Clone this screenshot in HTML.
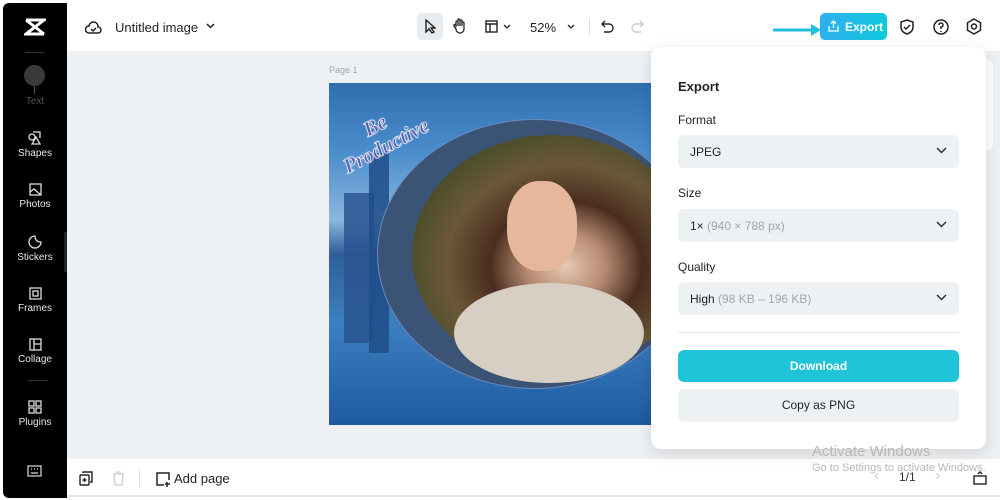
<!DOCTYPE html>
<html><head><meta charset="utf-8"><style>
*{box-sizing:border-box;margin:0;padding:0}
body{width:1000px;height:500px;overflow:hidden;background:#fff;font-family:"Liberation Sans",sans-serif;position:relative;color:#1f2329}
.side{position:absolute;left:3px;top:3px;width:64px;height:495px;background:#000;border-radius:6px 0 0 6px}
.it{position:absolute;left:0;width:64px;text-align:center;color:#e8e8e8;font-size:10px}
.it svg{display:block;margin:0 auto 3px}
.top{position:absolute;left:67px;top:3px;right:0;height:48px;background:#fff}
.canvas{position:absolute;left:67px;top:51px;right:0;height:408px;background:#eef1f4}
.bot{position:absolute;left:67px;top:459px;right:0;height:38px;background:#fff;border-bottom:2px solid #e5e5e5}
.panel{position:absolute;left:651px;top:47px;width:335px;height:402px;background:#fff;border-radius:10px;box-shadow:0 4px 16px rgba(0,0,0,.12)}
.lbl{position:absolute;left:27px;font-size:12px;color:#222}
.fld{position:absolute;left:27px;width:281px;height:33px;background:#eef1f4;border-radius:6px;font-size:12px;padding:10px 12px;color:#222}
.fld .g{color:#a0a6ae}
.fld svg{position:absolute;right:12px;top:12px}
</style></head><body>
<div class="side">
 <svg style="position:absolute;left:21px;top:15px" width="22" height="18" viewBox="0 0 22 18"><path d="M2 2h18L2 16h18M2 2l18 14" stroke="#fff" stroke-width="3" fill="none"/></svg>
 <div style="position:absolute;left:22px;top:49px;width:20px;height:1px;background:#333"></div>
 <div style="position:absolute;left:21px;top:62px;width:21px;height:21px;border-radius:50%;background:#3a3a3a"></div>
 <div style="position:absolute;left:31px;top:83px;width:1px;height:8px;background:#555"></div>
 <div class="it" style="top:93px;color:#555">Text</div>
 <div class="it" style="top:128px"><svg width="14" height="14" viewBox="0 0 14 14" fill="none" stroke="#ddd" stroke-width="1.3"><circle cx="4" cy="6" r="3"/><path d="M5 1h7v6M8 6l4 7H4z"/></svg>Shapes</div>
 <div class="it" style="top:180px"><svg width="13" height="13" viewBox="0 0 13 13" fill="none" stroke="#ddd" stroke-width="1.3"><rect x="1" y="1" width="11" height="11"/><path d="M1 9l4-3 7 6"/></svg>Photos</div>
 <div class="it" style="top:232px"><svg width="14" height="14" viewBox="0 0 14 14" fill="none" stroke="#ddd" stroke-width="1.3"><path d="M13 7A6 6 0 1 1 7 1c0 4 2 6 6 6z"/></svg>Stickers</div>
 <div class="it" style="top:284px"><svg width="13" height="13" viewBox="0 0 13 13" fill="none" stroke="#ddd" stroke-width="1.3"><rect x="1" y="1" width="11" height="11"/><rect x="4" y="4" width="5" height="5"/></svg>Frames</div>
 <div class="it" style="top:335px"><svg width="13" height="13" viewBox="0 0 13 13" fill="none" stroke="#ddd" stroke-width="1.3"><rect x="1" y="1" width="11" height="11"/><path d="M5 1v11M5 6h7"/></svg>Collage</div>
 <div style="position:absolute;left:25px;top:377px;width:20px;height:1px;background:#333"></div>
 <div class="it" style="top:397px"><svg width="14" height="14" viewBox="0 0 14 14" fill="none" stroke="#ddd" stroke-width="1.3"><rect x="1" y="1" width="5" height="5"/><rect x="8" y="1" width="5" height="5"/><rect x="1" y="8" width="5" height="5"/><rect x="8" y="8" width="5" height="5"/></svg>Plugins</div>
 <svg style="position:absolute;left:24px;top:462px" width="15" height="12" viewBox="0 0 15 12" fill="none" stroke="#ddd" stroke-width="1.2"><rect x="1" y="1" width="13" height="10"/><path d="M4 4h1M7 4h1M10 4h1M4 8h7"/></svg>
</div>
<div style="position:absolute;left:64px;top:232px;width:7px;height:40px;background:#222;border-radius:0 4px 4px 0"></div>
<div class="top">
 <svg style="position:absolute;left:18px;top:17px" width="17" height="14" viewBox="0 0 17 14" fill="none" stroke="#222" stroke-width="1.5"><path d="M4 13a3.5 3.5 0 0 1 0-7 4.5 4.5 0 0 1 9 1 3 3 0 0 1 0 6z"/><path d="M6 9l2 2 3-3"/></svg>
 <div style="position:absolute;left:48px;top:17px;font-size:13px;color:#222">Untitled image</div>
 <svg style="position:absolute;left:139px;top:20px" width="9" height="6" viewBox="0 0 9 6"><path d="M1 1l3.5 3.5L8 1" stroke="#222" stroke-width="1.5" fill="none"/></svg>
 <div style="position:absolute;left:350px;top:10px;width:26px;height:27px;background:#e9ecef;border-radius:5px"></div>
 <svg style="position:absolute;left:357px;top:16px" width="12" height="15" viewBox="0 0 12 15"><path d="M2 1v12l3-3 3 4 2-1-3-4h4z" stroke="#222" stroke-width="1.4" fill="none"/></svg>
 <svg style="position:absolute;left:386px;top:15px" width="14" height="16" viewBox="0 0 14 16" fill="none" stroke="#222" stroke-width="1.3"><path d="M3 9V4a1 1 0 0 1 2 0v4V2a1 1 0 0 1 2 0v6V3a1 1 0 0 1 2 0v5V5a1 1 0 0 1 2 0v6a4 4 0 0 1-4 4H7a4 4 0 0 1-4-4L1 8a1 1 0 0 1 2-1z"/></svg>
 <svg style="position:absolute;left:418px;top:17px" width="13" height="13" viewBox="0 0 13 13" fill="none" stroke="#222" stroke-width="1.4"><rect x="1" y="1" width="11" height="11"/><path d="M1 4h11M5 4v8"/></svg>
 <svg style="position:absolute;left:436px;top:21px" width="8" height="5" viewBox="0 0 8 5"><path d="M1 1l3 3 3-3" stroke="#222" stroke-width="1.3" fill="none"/></svg>
 <div style="position:absolute;left:463px;top:17px;font-size:13px;color:#222">52%</div>
 <svg style="position:absolute;left:500px;top:21px" width="8" height="5" viewBox="0 0 8 5"><path d="M1 1l3 3 3-3" stroke="#222" stroke-width="1.3" fill="none"/></svg>
 <div style="position:absolute;left:522px;top:15px;width:1px;height:17px;background:#ddd"></div>
 <svg style="position:absolute;left:534px;top:17px" width="13" height="14" viewBox="0 0 13 14" fill="none" stroke="#222" stroke-width="1.4"><path d="M4 1L1 4l3 3M1 4h7a4 4 0 0 1 0 8H3"/></svg>
 <svg style="position:absolute;left:564px;top:17px" width="13" height="14" viewBox="0 0 13 14" fill="none" stroke="#ccc" stroke-width="1.4"><path d="M9 1l3 3-3 3M12 4H5a4 4 0 0 0 0 8h5"/></svg>
 <svg style="position:absolute;left:706px;top:21px" width="50" height="12" viewBox="0 0 50 12"><path d="M0 6h40" stroke="#1fc0d8" stroke-width="3"/><path d="M38 0l10 6-10 6z" fill="#1fc0d8"/></svg>
 <div style="position:absolute;left:753px;top:10px;width:67px;height:27px;border-radius:5px;background:linear-gradient(90deg,#2fb0ee,#11c9de);color:#fff;font-size:12px;font-weight:bold;padding:7px 0 0 25px;white-space:nowrap">Export</div>
 <svg style="position:absolute;left:761px;top:17px" width="11" height="12" viewBox="0 0 11 12" fill="none" stroke="#fff" stroke-width="1.3"><path d="M5.5 8V1M3 3.5l2.5-2.5L8 3.5M1 6v5h9V6"/></svg>
 <svg style="position:absolute;left:833px;top:16px" width="14" height="16" viewBox="0 0 14 16" fill="none" stroke="#222" stroke-width="1.5"><path d="M7 1l6 2v5c0 4-3 6-6 7-3-1-6-3-6-7V3z"/><path d="M4 8l2 2 4-4"/></svg>
 <svg style="position:absolute;left:866px;top:16px" width="16" height="16" viewBox="0 0 16 16" fill="none" stroke="#222" stroke-width="1.5"><circle cx="8" cy="8" r="7"/><path d="M6 6a2 2 0 1 1 2 2v2M8 12v1"/></svg>
 <svg style="position:absolute;left:899px;top:15px" width="16" height="17" viewBox="0 0 16 17" fill="none" stroke="#222" stroke-width="1.5"><path d="M8 1l6.5 3.75v7.5L8 16 1.5 12.25v-7.5z"/><circle cx="8" cy="8.5" r="2.5"/></svg>
</div>
<div class="canvas">
 <div style="position:absolute;left:262px;top:14px;font-size:9px;color:#9aa">Page 1</div>
 <div style="position:absolute;left:262px;top:32px;width:322px;height:342px;overflow:hidden;background:linear-gradient(180deg,#2f6fb0 0%,#4a8ccc 20%,#8bb6de 40%,#2e5f97 50%,#3c7fc0 70%,#1e5aa0 100%)">
  <div style="position:absolute;left:15px;top:110px;width:30px;height:150px;background:#2a5590;opacity:.85"></div>
  <div style="position:absolute;left:40px;top:70px;width:20px;height:200px;background:#1f4d88;opacity:.85"></div>
  <div style="position:absolute;left:48px;top:36px;width:316px;height:270px;border-radius:50%;background:#3b5476;border:1px solid #6a8ac0"></div>
  <div style="position:absolute;left:83px;top:52px;width:280px;height:238px;border-radius:50%;background:radial-gradient(ellipse at 55% 55%,#e8c8b4 0%,#b58a70 18%,#4a2d20 35%,#6b5838 55%,#3f4a25 80%)"></div>
  <div style="position:absolute;left:125px;top:200px;width:190px;height:100px;border-radius:50%;background:#d8cfc4"></div>
  <div style="position:absolute;left:178px;top:98px;width:70px;height:90px;border-radius:45%;background:#e6b79c"></div>
  <div style="position:absolute;left:5px;top:30px;transform:rotate(-28deg);font:bold italic 21px 'Liberation Serif',serif;color:#5a5fb0;-webkit-text-stroke:.6px #fff;text-shadow:0 0 2px #fff;line-height:23px;text-align:center">Be<br>Productive</div>
 </div>
</div>
<div class="bot">
 <svg style="position:absolute;left:12px;top:12px" width="14" height="15" viewBox="0 0 14 15" fill="none" stroke="#222" stroke-width="1.4"><rect x="1" y="4" width="9" height="10" rx="1"/><path d="M4 2V1h9v10h-2M5.5 7v4M3.5 9h4"/></svg>
 <svg style="position:absolute;left:45px;top:12px" width="13" height="15" viewBox="0 0 13 15" fill="none" stroke="#ccc" stroke-width="1.3"><path d="M1 3h11M5 3V1h3v2M2 3l1 11h7l1-11"/></svg>
 <div style="position:absolute;left:72px;top:10px;width:1px;height:18px;background:#ddd"></div>
 <svg style="position:absolute;left:88px;top:12px" width="16" height="16" viewBox="0 0 16 16" fill="none" stroke="#222" stroke-width="1.5"><path d="M9 14H2V2h12v7M12 11v5M10 13h5"/></svg>
 <div style="position:absolute;left:107px;top:12px;font-size:13px;color:#222">Add page</div>
 <div style="position:absolute;left:832px;top:11px;font-size:12px;color:#333">1/1</div>
 <div style="position:absolute;left:807px;top:8px;font-size:15px;color:#ccc">‹</div>
 <div style="position:absolute;left:868px;top:8px;font-size:15px;color:#ccc">›</div>
 <svg style="position:absolute;left:906px;top:12px" width="14" height="14" viewBox="0 0 14 14" fill="none" stroke="#222" stroke-width="1.4"><rect x="1" y="5" width="12" height="8"/><path d="M5 3l2-2 2 2"/></svg>
</div>
<div style="position:absolute;left:985px;top:60px;width:8px;height:90px;background:#fff;border-radius:0 6px 6px 0"></div>
<div class="panel">
 <div style="position:absolute;left:27px;top:32px;font-size:13px;font-weight:bold">Export</div>
 <div class="lbl" style="top:66px">Format</div>
 <div class="fld" style="top:88px">JPEG<svg width="11" height="7" viewBox="0 0 11 7"><path d="M1 1l4.5 4.5L10 1" stroke="#333" stroke-width="1.5" fill="none"/></svg></div>
 <div class="lbl" style="top:139px">Size</div>
 <div class="fld" style="top:162px">1× <span class="g">(940 × 788 px)</span><svg width="11" height="7" viewBox="0 0 11 7"><path d="M1 1l4.5 4.5L10 1" stroke="#333" stroke-width="1.5" fill="none"/></svg></div>
 <div class="lbl" style="top:213px">Quality</div>
 <div class="fld" style="top:235px">High <span class="g">(98 KB – 196 KB)</span><svg width="11" height="7" viewBox="0 0 11 7"><path d="M1 1l4.5 4.5L10 1" stroke="#333" stroke-width="1.5" fill="none"/></svg></div>
 <div style="position:absolute;left:27px;top:285px;width:281px;height:1px;background:#e3e6ea"></div>
 <div style="position:absolute;left:27px;top:303px;width:281px;height:32px;background:#20c4d8;border-radius:6px;color:#fff;font-size:12px;font-weight:bold;text-align:center;line-height:32px">Download</div>
 <div style="position:absolute;left:27px;top:342px;width:281px;height:33px;background:#eef1f4;border-radius:6px;font-size:12px;text-align:center;line-height:33px">Copy as PNG</div>
</div>
<div style="position:absolute;left:812px;top:443px;font-size:15px;color:#b8b8b8">Activate Windows</div>
<div style="position:absolute;left:812px;top:462px;font-size:11px;color:#b8b8b8">Go to Settings to activate Windows.</div>
</body></html>
